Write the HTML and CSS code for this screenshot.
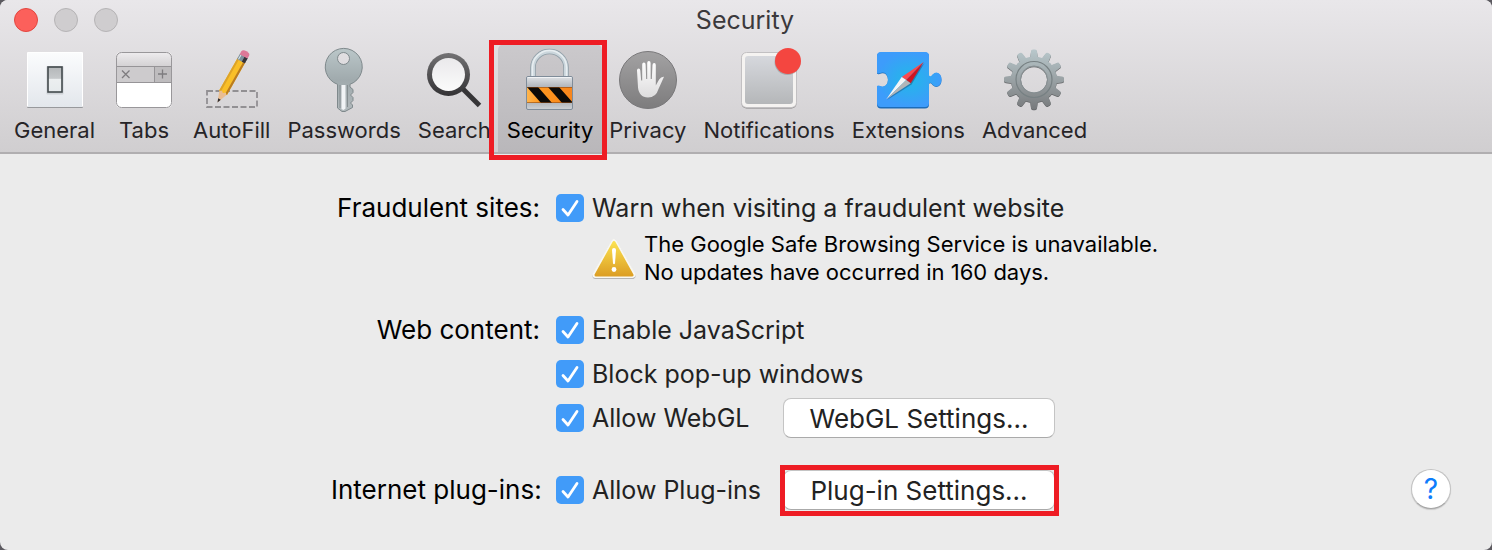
FILE: index.html
```html
<!DOCTYPE html>
<html lang="en">
<head>
  <meta charset="UTF-8">
  <meta name="viewport" content="width=device-width, initial-scale=1.0">
  <title>Security</title>
  <link rel="stylesheet" href="styles.css">
</head>
<body>
  <div class="window">
    <header class="toolbar">
      <div class="titlebar">
        <div class="lights">
          <button class="light close" aria-label="Close"></button>
          <button class="light" aria-label="Minimize" disabled></button>
          <button class="light" aria-label="Zoom" disabled></button>
        </div>
        <h1>Security</h1>
      </div>

      <nav class="tabs">
        <button class="tab">
          <svg class="icon" viewBox="0 0 64 64">
            <defs>
              <linearGradient id="plate" x2="0" y2="1"><stop stop-color="#fbfcfd"/><stop offset="1" stop-color="#e3e7ec"/></linearGradient>
              <linearGradient id="rocker" x2="0" y2="1"><stop stop-color="#b4b7b9"/><stop offset=".45" stop-color="#c5c8ca"/><stop offset=".5" stop-color="#eceff0"/><stop offset="1" stop-color="#e6eaec"/></linearGradient>
            </defs>
            <rect x="4" y="6" width="56" height="55" rx="1" fill="#98999c"/>
            <rect x="4" y="5" width="56" height="55" rx="1" fill="#fff"/>
            <rect x="5" y="6" width="54" height="54" fill="url(#plate)"/>
            <rect x="23.500" y="19" width="17" height="28.500" rx="1" fill="#ced2d6"/>
            <rect x="25" y="20" width="14" height="25" fill="url(#rocker)" stroke="#434a4d" stroke-width="1.6"/>
          </svg>
          <span>General</span>
        </button>

        <button class="tab">
          <svg class="icon" viewBox="0 0 64 64">
            <defs>
              <linearGradient id="tabTop" x2="0" y2="1"><stop stop-color="#efedef"/><stop offset="1" stop-color="#d4d2d4"/></linearGradient>
              <clipPath id="tabClip"><rect x="4" y="5" width="56" height="56" rx="5"/></clipPath>
            </defs>
            <g clip-path="url(#tabClip)">
              <rect x="4" y="5" width="56" height="56" fill="#fff"/>
              <rect x="4" y="5" width="56" height="14" fill="url(#tabTop)"/>
              <rect x="4" y="19" width="56" height="17" fill="#cdcbcd"/>
              <rect x="42" y="19" width="18" height="17" fill="#bebcbe"/>
              <path d="M4 19.500h56M4 35.500h56M42.500 19v17" stroke="#969497" fill="none"/>
            </g>
            <path d="M10 23.500l7.500 7.500m0-7.500l-7.500 7.500M50.500 22.500v9M46 27h9" stroke="#7e7c7f" stroke-width="1.300" fill="none"/>
            <rect x="4.500" y="5.500" width="55" height="55" rx="5" fill="none" stroke="#99979a"/>
          </svg>
          <span>Tabs</span>
        </button>

        <button class="tab">
          <svg class="icon" viewBox="0 0 64 64">
            <rect x="7" y="44" width="50" height="16" fill="none" stroke="#929093" stroke-width="1.800" stroke-dasharray="6 2.500"/>
            <g transform="translate(17.500 55.500) rotate(29.500)">
              <path d="M0 0L-4.500-12h9z" fill="#e9bd92"/>
              <path d="M0 0L-1.500-4h3z" fill="#2d2b2d"/>
              <path d="M-4.500-11V-49h9v38l-2.200-1.500-2.300 1.500-2.200-1.500z" fill="#f9bf28"/>
              <path d="M-4.500-11V-49h2v36.500z" fill="#dda329"/>
              <path d="M2.500-12.500V-49h2v38z" fill="#b97b20"/>
              <path d="M-4.500-47.500h9v-6h-9z" fill="#7d919d"/>
              <path d="M1-47.500h3.500v-6H1z" fill="#37333a"/>
              <path d="M-3-48v-5" stroke="#dce7ec"/>
              <path d="M-4.500-53v-3q0-3 4.500-3t4.500 3v3z" fill="#dd7898"/>
            </g>
          </svg>
          <span>AutoFill</span>
        </button>

        <button class="tab">
          <svg class="icon" viewBox="0 0 64 64">
            <defs>
              <linearGradient id="key" x2="0" y2="1"><stop stop-color="#bbc7c9"/><stop offset=".5" stop-color="#a0aaad"/><stop offset="1" stop-color="#b1b9bc"/></linearGradient>
            </defs>
            <path fill-rule="evenodd" d="M25.500 37.300A18.500 18.500 0 1 1 38 37.300V40l3 2.500v3L38.500 48l2.500 2.500v3L38.500 56l2 2v2.500L33 64.500h-3l-4.500-3.500zM31.500 5.500a6 6 0 0 0 0 12a6 6 0 0 0 0-12z" fill="url(#key)" stroke="#7f898c"/>
            <path d="M29.500 38v24l2 1 2-1.500V38z" fill="#f1f4f6"/>
            <path d="M28 38v23M35.500 38v22" stroke="#868e91"/>
          </svg>
          <span>Passwords</span>
        </button>

        <button class="tab">
          <svg class="icon" viewBox="0 0 64 64">
            <defs>
              <linearGradient id="rim" x2="0" y2="1"><stop stop-color="#737274"/><stop offset="1" stop-color="#333234"/></linearGradient>
              <linearGradient id="lens" x2="0" y2="1"><stop stop-color="#eae9eb"/><stop offset="1" stop-color="#fbfbfb"/></linearGradient>
            </defs>
            <path d="M40 41l17.500 17.500" stroke="#363537" stroke-width="5"/>
            <circle cx="26.500" cy="27.500" r="21.500" fill="url(#rim)"/>
            <circle cx="26.500" cy="27.500" r="16.500" fill="url(#lens)"/>
          </svg>
          <span>Search</span>
        </button>

        <button class="tab selected" aria-current="page">
          <svg class="icon" viewBox="0 0 64 64">
            <defs>
              <linearGradient id="steel" x2="0" y2="1"><stop stop-color="#e0e3e7"/><stop offset=".3" stop-color="#b3b7bd"/><stop offset=".8" stop-color="#b3b7bd"/><stop offset="1" stop-color="#ced2d5"/></linearGradient>
              <linearGradient id="orange"><stop stop-color="#ffb54d"/><stop offset=".3" stop-color="#ff971f"/><stop offset="1" stop-color="#f7851c"/></linearGradient>
              <clipPath id="band"><rect x="9" y="40" width="45" height="16"/></clipPath>
            </defs>
            <path d="M15 31V20.500a16.500 16 0 0 1 33 0V31" fill="none" stroke="#8f9da6" stroke-width="5.500"/>
            <path d="M15 31V20.500a16.500 16 0 0 1 33 0V31" fill="none" stroke="#cbd6dc" stroke-width="4"/>
            <path d="M14.500 31V20.500a17 17 0 0 1 34 0V31" fill="none" stroke="#e8eef1" stroke-width="1.500"/>
            <rect x="8.500" y="29.500" width="46" height="33" rx="1.500" fill="url(#steel)" stroke="#7f8c99"/>
            <path d="M9.500 30.500h44" stroke="#f1f3f5"/>
            <g clip-path="url(#band)">
              <rect x="9" y="40" width="45" height="16" fill="url(#orange)"/>
              <path d="M9 40h11l14 16H23zM30 40h11l14 16H44z" fill="#0c0a08"/>
              <path d="M9 40.500h45M9 55.500h45" stroke="#8a4a18" stroke-opacity=".6"/>
            </g>
          </svg>
          <span>Security</span>
        </button>

        <button class="tab">
          <svg class="icon" viewBox="0 0 64 64">
            <defs>
              <linearGradient id="disc" x2="0" y2="1"><stop stop-color="#a3a2a3"/><stop offset="1" stop-color="#7d7c7d"/></linearGradient>
              <linearGradient id="palm" x2="0" y2="1"><stop stop-color="#fff"/><stop offset="1" stop-color="#dddcdd"/></linearGradient>
            </defs>
            <circle cx="32" cy="33" r="28.500" fill="url(#disc)" stroke="#79787a"/>
            <path d="M21 23.500q0-2 1.600-2t1.700 2l.9 10h1V17.500q0-2 1.700-2t1.700 2L30.200 32h1V16q0-2 1.700-2t1.700 2l.1 16h1.100l.7-14q.1-2 1.700-2t1.600 2v20.500l3.300-6q2-3 4.900-2.800l-5.600 12.500Q40 50.500 32 50.500c-6 0-9.400-4-10-10z" fill="url(#palm)"/>
          </svg>
          <span>Privacy</span>
        </button>

        <button class="tab">
          <svg class="icon" viewBox="0 0 64 64">
            <defs>
              <linearGradient id="screen" x2="0" y2="1"><stop stop-color="#d6d8dd"/><stop offset="1" stop-color="#b5b7b9"/></linearGradient>
            </defs>
            <rect x="4.500" y="6" width="55" height="55.500" rx="5" fill="#858383"/>
            <rect x="4.500" y="5.500" width="55" height="55" rx="5" fill="#f5f3f1" stroke="#c2c0c2"/>
            <rect x="8" y="9" width="48" height="48" rx="3" fill="url(#screen)"/>
            <circle cx="50.500" cy="15" r="13" fill="#555" fill-opacity=".3"/>
            <circle cx="51" cy="14" r="13" fill="#f44640"/>
          </svg>
          <span>Notifications</span>
        </button>

        <button class="tab">
          <svg class="icon" viewBox="0 0 64 64">
            <defs>
              <radialGradient id="puzzle"><stop stop-color="#22b8e8"/><stop offset="1" stop-color="#3d9cfb"/></radialGradient>
            </defs>
            <path d="M5 5h44q4 0 4 4v19q0 1.500 1.500 1.300 1-.3 2-1.800 2-2 4-2 5 1 5 7t-5 7q-2 0-4-2-1-1.500-2-1.800Q53 35.500 53 37v20q0 4-4 4H5q-4 0-4-4V39q1-1 2.500-.3 4 1.800 6.500-.7 2-2 2-5.500T10 27q-2.500-2.500-6.500-.7Q2 27 1 26V9q0-4 4-4z" fill="#1c6cb8" transform="translate(0 .6)"/>
            <path d="M5 5h44q4 0 4 4v19q0 1.500 1.500 1.300 1-.3 2-1.800 2-2 4-2 5 1 5 7t-5 7q-2 0-4-2-1-1.500-2-1.800Q53 35.500 53 37v19q0 4-4 4H5q-4 0-4-4V39q1-1 2.500-.3 4 1.800 6.500-.7 2-2 2-5.500T10 27q-2.500-2.500-6.500-.7Q2 27 1 26V9q0-4 4-4z" fill="url(#puzzle)"/>
            <path d="M11 53l24.500-15.500L48.500 16z" fill="#174a72" fill-opacity=".45"/>
            <path d="M47.700 15L25.700 30l4.500 3z" fill="#fb4a4e"/>
            <path d="M47.700 15L34.700 36.300l-4.500-3.300z" fill="#cf1520"/>
            <path d="M10.300 52.300L25.700 30l4.500 3z" fill="#f5f5f6"/>
            <path d="M10.300 52.300L34.700 36.300l-4.500-3.300z" fill="#b2b5b8"/>
          </svg>
          <span>Extensions</span>
        </button>

        <button class="tab">
          <svg class="icon" viewBox="0 0 64 64">
            <defs>
              <linearGradient id="metal" x2="0" y2="1"><stop stop-color="#bbcbcf"/><stop offset=".5" stop-color="#9aa2a5"/><stop offset="1" stop-color="#747678"/></linearGradient>
              <path id="teeth" d="M28 12l1-7.500q.2-2 2-2h2q1.800 0 2 2l1 7.500zM28 53l1 7.500q.2 2 2 2h2q1.800 0 2-2l1-7.500z"/>
              <mask id="gear" maskUnits="userSpaceOnUse" x="0" y="0" width="64" height="66">
                <g fill="#fff">
                  <circle cx="32" cy="32.500" r="23"/>
                  <use href="#teeth"/>
                  <use href="#teeth" transform="rotate(30 32 32.500)"/>
                  <use href="#teeth" transform="rotate(60 32 32.500)"/>
                  <use href="#teeth" transform="rotate(90 32 32.500)"/>
                  <use href="#teeth" transform="rotate(120 32 32.500)"/>
                  <use href="#teeth" transform="rotate(150 32 32.500)"/>
                </g>
                <circle cx="32" cy="32.500" r="13" fill="#000"/>
              </mask>
            </defs>
            <rect width="64" height="65" fill="#626466" mask="url(#gear)" transform="translate(0 .7)"/>
            <rect width="64" height="65" fill="url(#metal)" mask="url(#gear)"/>
            <circle cx="32" cy="32.500" r="18" fill="none" stroke="#778083" stroke-width="1.200"/>
            <circle cx="32" cy="32.500" r="13.500" fill="none" stroke="#858d90"/>
          </svg>
          <span>Advanced</span>
        </button>
      </nav>
    </header>

    <main class="content">
      <form class="settings" onsubmit="return false">
        <div class="group">
          <div class="group-label">Fraudulent sites:</div>
          <div class="options">
            <label class="check"><input type="checkbox" checked>Warn when visiting a fraudulent website</label>
            <div class="notice">
              <svg class="warning" viewBox="0 0 44 42">
                <defs>
                  <linearGradient id="amber" x2="0" y2="1"><stop stop-color="#fbe04f"/><stop offset="1" stop-color="#dda025"/></linearGradient>
                </defs>
                <path d="M22 4.500L40.500 38h-37z" fill="#aaa" stroke="#b5b5b5" stroke-width="6" stroke-linejoin="round"/>
                <path d="M22 4L40.500 37h-37z" fill="#fff" stroke="#f8f7f2" stroke-width="6" stroke-linejoin="round"/>
                <path d="M22 4.500L40 37H4z" fill="url(#amber)" stroke="url(#amber)" stroke-width="3" stroke-linejoin="round"/>
                <path d="M20 12q0-2 2-2t2 2l-1 13.500q-1 1.500-2 0z" fill="#fff"/>
                <circle cx="22" cy="31.500" r="2.400" fill="#fff"/>
              </svg>
              <p>The Google Safe Browsing Service is unavailable.<br>No updates have occurred in 160 days.</p>
            </div>
          </div>
        </div>

        <div class="group">
          <div class="group-label">Web content:</div>
          <div class="options">
            <label class="check"><input type="checkbox" checked>Enable JavaScript</label>
            <label class="check"><input type="checkbox" checked>Block pop-up windows</label>
            <div class="line">
              <label class="check"><input type="checkbox" checked>Allow WebGL</label>
              <button class="push">WebGL Settings...</button>
            </div>
          </div>
        </div>

        <div class="group plugins">
          <div class="group-label">Internet plug-ins:</div>
          <div class="options">
            <div class="line">
              <label class="check"><input type="checkbox" checked>Allow Plug-ins</label>
              <button class="push marked">Plug-in Settings...</button>
            </div>
          </div>
        </div>
      </form>
      <button class="help" aria-label="Help">?</button>
    </main>
  </div>
</body>
</html>
```

FILE: styles.css
```css
* {
  box-sizing: border-box;
}

body {
  margin: 0;
  background-color: #5c5a60;
  color: #000000;
  font-family: Inter, "Liberation Sans", sans-serif;
  font-size: 25px;
}

button {
  margin: 0;
  padding: 0;
  border: none;
  background: none;
  color: inherit;
  font: inherit;
}

.window {
  min-height: 100vh;
  display: flex;
  flex-direction: column;
  border-radius: 8px;
  overflow: hidden;
  background-color: #ebebeb;
}

.toolbar {
  flex: none;
  background: linear-gradient(#e9e7ea, #d0ced0);
  border-bottom: 2px solid #b0aeb0;
}

.titlebar {
  display: grid;
  grid-template-columns: 1fr auto 1fr;
  align-items: center;
  height: 40px;
  padding: 0 16px 0 14px;
}

.lights {
  display: flex;
  gap: 16px;
}

.light {
  width: 24px;
  height: 24px;
  border: 1px solid #b5b3b5;
  border-radius: 50%;
  background-color: #cfcdcf;
}

.light.close {
  border-color: #e2463f;
  background-color: #fc605b;
}

h1 {
  margin: 0;
  color: #3b393c;
  font-size: 25px;
  font-weight: 400;
  line-height: 40px;
}

.tabs {
  display: flex;
  gap: 1px;
  padding: 4px 6px 0;
}

.tab {
  position: relative;
  display: flex;
  flex-direction: column;
  align-items: center;
  min-width: 78px;
  height: 108px;
  padding: 3px 8px 0;
  color: #262427;
  font-size: 22px;
  line-height: 28px;
}

.icon {
  width: 64px;
  height: 64px;
  margin-bottom: 5px;
  overflow: visible;
}

.tab.selected {
  margin: 0 -2px;
  padding: 3px 9px 0;
  border-radius: 6px 6px 0 0;
  background: linear-gradient(#cbc9cc, #b9b7ba);
  color: #000000;
}

/* red frame around the current tab */
.tab.selected::after {
  content: "";
  position: absolute;
  inset: -4px -5px -8px -9px;
  z-index: 1;
  border: 5px solid #ee1c24;
}

.content {
  position: relative;
  flex: 1;
  padding: 40px 0;
}

.settings {
  display: flex;
  flex-direction: column;
  gap: 30px;
}

.group {
  display: grid;
  grid-template-columns: 209px 605px;
  column-gap: 16px;
  justify-content: center;
}

.plugins {
  margin-top: 14px;
}

.group-label {
  font-size: 26px;
  line-height: 28px;
  text-align: right;
  white-space: nowrap;
}

.options {
  display: flex;
  flex-direction: column;
  gap: 16px;
}

.check {
  display: flex;
  align-items: center;
  gap: 8px;
  color: #222222;
  line-height: 28px;
  white-space: nowrap;
}

.check input {
  appearance: none;
  flex: none;
  width: 28px;
  height: 28px;
  margin: 0;
  border-radius: 5px;
  background: #419bf9 url("data:image/svg+xml,%3Csvg xmlns='http://www.w3.org/2000/svg' viewBox='0 0 28 28'%3E%3Cpath d='M7 15.500l5 5.500L21 7.500' fill='none' stroke='white' stroke-width='2.800' stroke-linecap='round' stroke-linejoin='round'/%3E%3C/svg%3E");
}

.notice {
  display: flex;
  gap: 8px;
  margin-top: -8px;
  padding-left: 36px;
}

.warning {
  width: 44px;
  height: 42px;
  margin-top: 8px;
}

.notice p {
  margin: 0;
  font-size: 22px;
  line-height: 28px;
  white-space: nowrap;
}

.line {
  display: flex;
  align-items: center;
  height: 28px;
}

.line .check {
  width: 227px;
}

.push {
  position: relative;
  width: 272px;
  height: 40px;
  border: 1px solid #c4c4c4;
  border-bottom-color: #aaaaaa;
  border-radius: 8px;
  background-color: #ffffff;
  color: #222222;
  font-size: 26px;
}

/* red frame around the plug-in button */
.marked::after {
  content: "";
  position: absolute;
  inset: -6px -5px -7px -4px;
  border: 5px solid #ee1c24;
}

.help {
  position: absolute;
  right: 41px;
  bottom: 41px;
  width: 40px;
  height: 40px;
  border: 1px solid #c2c2c2;
  border-bottom-color: #a6a6a6;
  border-radius: 50%;
  background-color: #ffffff;
  box-shadow: 0 1px 1px rgba(0, 0, 0, 0.15);
  color: #0d7dfc;
  font-size: 28px;
}
```
